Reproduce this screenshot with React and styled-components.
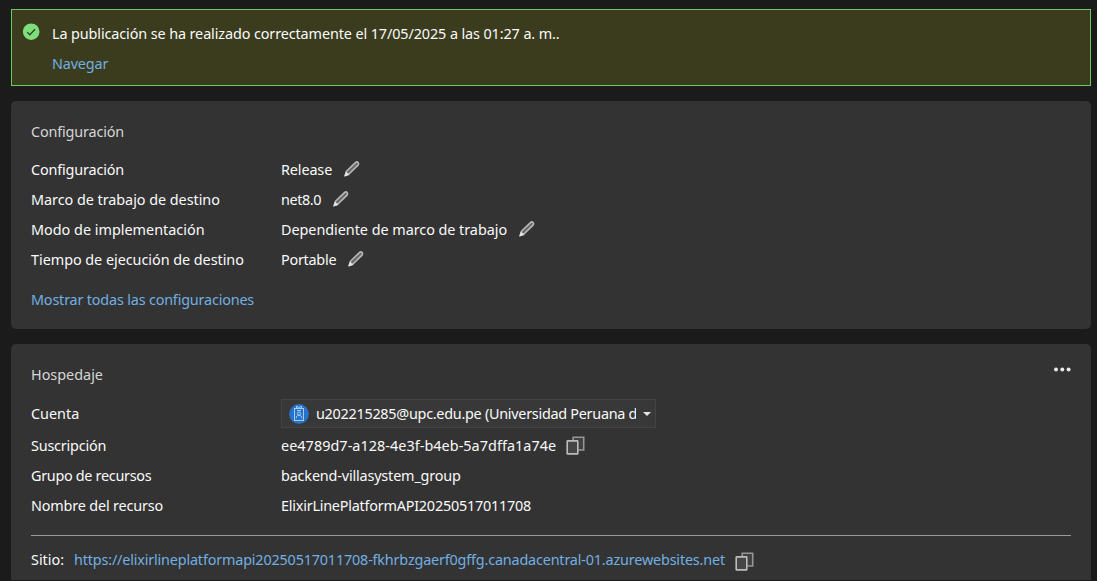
import React from "react";
import styled, { createGlobalStyle } from "styled-components";

const GlobalStyle = createGlobalStyle`
  * { box-sizing: border-box; }
  body {
    margin: 0;
    background: #1b1b1b;
    color: #fafafa;
    font: 14.4px/20px "Segoe UI", "Noto Sans", "Open Sans", sans-serif;
    overflow: hidden;
  }
`;

const Page = styled.main`
  height: 581px;
  padding: 9px 6px 1px 11px;
  display: flex;
  flex-direction: column;
  gap: 15px;
  overflow: hidden;
`;

const Text = styled.span`
  white-space: pre;
  letter-spacing: ${(p) => p.$track || 0}px;
`;

const Link = styled.a`
  color: #72afe2;
  white-space: pre;
  cursor: pointer;
  letter-spacing: ${(p) => p.$track || 0}px;
`;

const Banner = styled.section`
  flex: none;
  height: 77px;
  display: flex;
  gap: 11px;
  padding: 14px 11px;
  background: #3a3c1d;
  border: 1px solid #6ccb5f;
`;

const BannerBody = styled.div`
  display: flex;
  flex-direction: column;
  gap: 10px;
`;

const Card = styled.section`
  flex: none;
  height: ${(p) => p.$height}px;
  padding: 21px 20px 0;
  background: #333333;
  border-radius: ${(p) => (p.$open ? "5px 5px 0 0" : "5px")};
`;

const CardHeader = styled.header`
  display: flex;
  justify-content: space-between;
  height: 20px;
  margin-bottom: ${(p) => p.$gap}px;
  color: #d6d6d6;
`;

const Row = styled.div`
  display: grid;
  grid-template-columns: 250px 1fr;
  align-items: center;
  height: ${(p) => p.$height || 30}px;
`;

const Value = styled.div`
  display: flex;
  align-items: center;
  gap: ${(p) => p.$gap || 11}px;
`;

const Footer = styled.div`
  display: flex;
  padding-top: 15px;
`;

const Select = styled.button`
  display: flex;
  align-items: center;
  width: 375px;
  height: 29px;
  margin: 0 0 1px;
  padding: 0 4px 0 7px;
  background: #383838;
  border: 1px solid #434343;
  color: inherit;
  font: inherit;
  text-align: left;
`;

const SelectLabel = styled.span`
  width: 320px;
  margin-left: 7px;
  overflow: hidden;
  white-space: pre;
  letter-spacing: ${(p) => p.$track || 0}px;
`;

const Caret = styled.span`
  margin-left: 7px;
  border: 4px solid transparent;
  border-top-color: #e6e6e6;
  border-bottom: 0;
`;

const Site = styled.footer`
  display: flex;
  align-items: center;
  gap: 10px;
  height: 35px;
  margin-top: 14px;
  padding-top: 14px;
  border-top: 1px solid #999999;
`;

const Icon = styled.svg`
  display: block;
  flex: none;
  margin-top: ${(p) => p.$top || 0}px;
`;

const CheckIcon = () => (
  <Icon width="18" height="18" viewBox="0 0 18 18" $top={-1}>
    <circle cx="8.2" cy="8.7" r="8.3" fill="#80dd7b" />
    <path d="M4.2 9.1l2.6 2.6 5.3-5.5" fill="none" stroke="#2d4423" strokeWidth="1.3" />
  </Icon>
);

const PencilIcon = () => (
  <Icon width="18" height="18" viewBox="0 0 18 18" $top={-2}>
    <path
      d="M2.2 15.6l1.5-4.6 8.5-8.2c1-.9 2.2-1 2.9-.3s.6 2-.3 2.9l-8.6 8.4z"
      fill="#666666"
      stroke="#b8b8b8"
      strokeWidth="1.6"
      strokeLinejoin="round"
    />
    <path d="M1.2 16.5l1.7-5 3.6 3.4z" fill="#e4e4e4" />
  </Icon>
);

const CopyIcon = ({ top }) => (
  <Icon width="20" height="20" viewBox="0 0 20 20" $top={top}>
    <path d="M7.2 5V1.2h10.5v12.8h-5.4" fill="#404040" stroke="#969696" strokeWidth="1.6" />
    <rect x="1.2" y="4.9" width="10.6" height="13" rx=".5" fill="#464646" stroke="#bcbcbc" strokeWidth="1.6" />
  </Icon>
);

const AccountIcon = () => (
  <Icon width="20" height="20" viewBox="0 0 20 20">
    <circle cx="10" cy="10" r="9.9" fill="#2672c9" />
    <g fill="none" stroke="#a4cdf4" strokeWidth="1">
      <rect x="5.5" y="4.5" width="9" height="12" />
      <path d="M7.5 4.5V2.2l2.5 1.4 2.5-1.4v2.3M8 6.5h4" />
      <circle cx="10" cy="9.6" r="1.6" />
      <path d="M7.3 14.4v-1.1c0-1.1 1.1-1.8 2.7-1.8s2.7.7 2.7 1.8v1.1" />
    </g>
  </Icon>
);

const MoreIcon = () => (
  <Icon width="18" height="6" viewBox="0 0 18 6" $top={2}>
    <g fill="#e8e8e8">
      <circle cx="3" cy="2.5" r="2" />
      <circle cx="9.3" cy="2.5" r="2" />
      <circle cx="15.6" cy="2.5" r="2" />
    </g>
  </Icon>
);

const settings = [
  { label: "Configuración", labelTrack: -0.15, value: "Release", track: -0.12 },
  { label: "Marco de trabajo de destino", labelTrack: -0.04, value: "net8.0", track: -0.4 },
  { label: "Modo de implementación", value: "Dependiente de marco de trabajo", track: -0.04 },
  { label: "Tiempo de ejecución de destino", labelTrack: -0.04, value: "Portable", track: -0.25 },
];

export default function App() {
  return (
    <>
      <GlobalStyle />
      <Page>
        <Banner>
          <CheckIcon />
          <BannerBody>
            <Text $track={-0.105}>La publicación se ha realizado correctamente el 17/05/2025 a las 01:27 a. m..</Text>
            <Link $track={-0.15}>Navegar</Link>
          </BannerBody>
        </Banner>

        <Card $height={228}>
          <CardHeader $gap={13}>
            <Text $track={-0.15}>Configuración</Text>
          </CardHeader>
          {settings.map((s) => (
            <Row key={s.label}>
              <Text $track={s.labelTrack}>{s.label}</Text>
              <Value>
                <Text $track={s.track}>{s.value}</Text>
                <PencilIcon />
              </Value>
            </Row>
          ))}
          <Footer>
            <Link $track={-0.18}>Mostrar todas las configuraciones</Link>
          </Footer>
        </Card>

        <Card $height={236} $open>
          <CardHeader $gap={12}>
            <Text>Hospedaje</Text>
            <MoreIcon />
          </CardHeader>
          <Row $height={34}>
            <Text>Cuenta</Text>
            <Select>
              <AccountIcon />
              <SelectLabel $track={-0.27}>u202215285@upc.edu.pe (Universidad Peruana d</SelectLabel>
              <Caret />
            </Select>
          </Row>
          <Row>
            <Text $track={-0.2}>Suscripción</Text>
            <Value $gap={10}>
              <Text $track={0.05}>ee4789d7-a128-4e3f-b4eb-5a7dffa1a74e</Text>
              <CopyIcon top={-1} />
            </Value>
          </Row>
          <Row>
            <Text $track={-0.3}>Grupo de recursos</Text>
            <Text $track={-0.16}>backend-villasystem_group</Text>
          </Row>
          <Row>
            <Text $track={-0.17}>Nombre del recurso</Text>
            <Text $track={-0.22}>ElixirLinePlatformAPI20250517011708</Text>
          </Row>
          <Site>
            <Text>Sitio:</Text>
            <Link $track={-0.176}>https://elixirlineplatformapi20250517011708-fkhrbzgaerf0gffg.canadacentral-01.azurewebsites.net</Link>
            <CopyIcon top={3} />
          </Site>
        </Card>
      </Page>
    </>
  );
}
